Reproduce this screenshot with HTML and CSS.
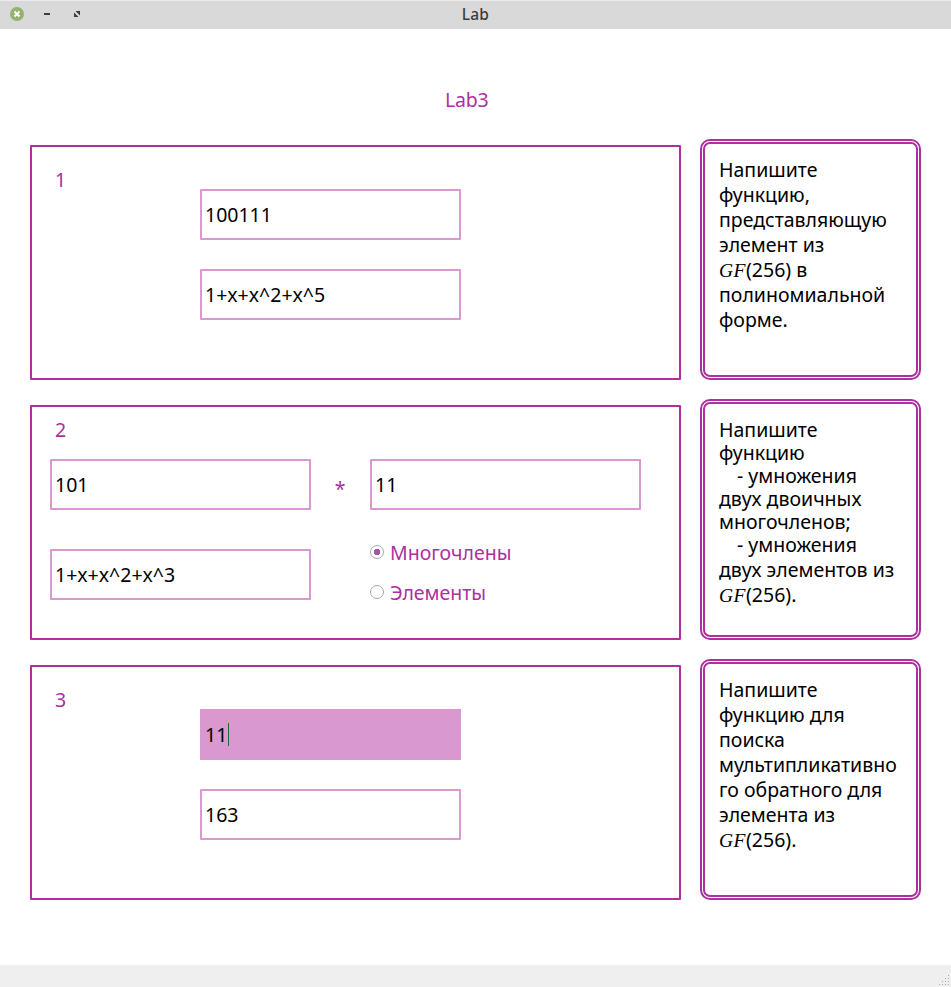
FILE: index.html
```html
<!DOCTYPE html>
<html lang="ru">
<head>
<meta charset="utf-8">
<title>Lab</title>
<link rel="stylesheet" href="styles.css">
</head>
<body>
<header class="titlebar">
  <svg class="controls" width="90" height="28" viewBox="0 0 90 28">
    <circle cx="17" cy="13" r="7" fill="#92b372"/>
    <path d="M14.5 10.5l5 5M19.5 10.5l-5 5" stroke="#fff" stroke-width="1.9"/>
    <path d="M44 13h6" stroke="#3c3c3c" stroke-width="2"/>
    <path d="M75.5 10h4.5v4.500zM74 11.500v4.500h4.500z" fill="#3c3c3c"/>
  </svg>
  <span class="window-title">Lab</span>
</header>
<main class="content">
  <h1 class="heading">Lab3</h1>
  <div class="tasks">
    <section class="card">
      <div class="side-number">1</div>
      <div class="fields">
        <div class="field">100111</div>
        <div class="field">1+x+x^2+x^5</div>
      </div>
    </section>
    <aside class="note">
      <p>Напишите<br>функцию,<br>представляющую<br>элемент из<br><i>GF</i>(256) в<br>полиномиальной<br>форме.</p>
    </aside>

    <section class="card stacked">
      <div class="top-number">2</div>
      <div class="operands">
        <div class="field">101</div>
        <div class="operator">*</div>
        <div class="field wide">11</div>
      </div>
      <div class="result-row">
        <div class="field">1+x+x^2+x^3</div>
        <div class="options">
          <div class="option"><span class="radio checked"></span>Многочлены</div>
          <div class="option"><span class="radio"></span>Элементы</div>
        </div>
      </div>
    </section>
    <aside class="note">
      <p class="tight">Напишите<br>функцию<br><span class="indent">- умножения</span><br>двух двоичных<br>многочленов;<br><span class="indent">- умножения</span></p>
      <p>двух элементов из<br><i>GF</i>(256).</p>
    </aside>

    <section class="card">
      <div class="side-number">3</div>
      <div class="fields">
        <div class="field focused">11<span class="caret"></span></div>
        <div class="field">163</div>
      </div>
    </section>
    <aside class="note">
      <p>Напишите<br>функцию для<br>поиска<br>мультипликативно<br>го обратного для<br>элемента из<br><i>GF</i>(256).</p>
    </aside>
  </div>
</main>
<footer class="statusbar">
  <svg width="12" height="12" viewBox="0 0 12 12" fill="#a8a8a8">
    <path d="M9 0h1v1h-1zM6 3h1v1h-1zM9 3h1v1h-1zM3 6h1v1h-1zM6 6h1v1h-1zM9 6h1v1h-1zM0 9h1v1h-1zM3 9h1v1h-1zM6 9h1v1h-1zM9 9h1v1h-1z"/>
  </svg>
</footer>
</body>
</html>
```
FILE: styles.css
```css
* { box-sizing: border-box; }
body {
  margin: 0;
  height: 987px;
  display: flex;
  flex-direction: column;
  background: #fff;
  color: #000;
  font: 19.5px/25px "Noto Sans", sans-serif;
}
.titlebar {
  height: 29px;
  display: grid;
  grid-template-columns: 90px 1fr 90px;
  background: #d9d9d9;
  border-top: 1px solid #ececec;
}
.controls { display: block; }
.window-title {
  text-align: center;
  font-size: 15.5px;
  font-weight: 500;
  line-height: 27px;
  letter-spacing: 0.2px;
  color: #3c3c3c;
}
.content { flex: 1; padding: 58px 0 0 30px; }
.heading {
  margin: 0 0 27px;
  padding-left: 415px;
  font-size: 19.5px;
  font-weight: 400;
  line-height: 25px;
  letter-spacing: -0.2px;
  color: #ad2fa0;
}
.tasks {
  display: grid;
  grid-template-columns: 651px 221px;
  grid-auto-rows: 241px;
  gap: 19px;
}
.card {
  margin-top: 6px;
  border: 2px solid #ad2fa0;
  border-radius: 1px;
  display: flex;
}
.card.stacked { display: block; padding: 10px 0 0 18px; }
.side-number { width: 168px; padding: 20px 0 0 23px; color: #ad2fa0; }
.top-number { height: 24px; padding-left: 5px; color: #ad2fa0; }
.fields { padding-top: 42px; display: flex; flex-direction: column; gap: 29px; }
.field {
  width: 261px;
  height: 51px;
  padding-left: 3px;
  border: 2px solid #d998cf;
  border-radius: 1px;
  display: flex;
  align-items: center;
}
.field.wide { width: 271px; }
.field.focused { background: #d998cf; border-radius: 0; }
.caret { width: 1px; height: 23px; margin-left: 1px; background: #1b6b34; }
.operands { display: flex; margin-top: 18px; }
.operator { width: 58px; margin-right: 1px; padding-top: 17px; text-align: center; color: #ad2fa0; }
.result-row { display: flex; gap: 59px; margin-top: 30px; }
.result-row .field { margin-top: 9px; }
.options { display: flex; flex-direction: column; gap: 15px; color: #ad2fa0; }
.option { display: flex; }
.radio {
  width: 14px;
  height: 14px;
  margin: 5px 6px 0 0;
  border: 1px solid #a9a9a9;
  border-radius: 50%;
  background: #fff;
}
.radio.checked { background: radial-gradient(circle, #a8539f 2.9px, #fff 3.5px); }
.note {
  padding: 13px 0 0 14px;
  border: 5px double #ad2fa0;
  border-radius: 10px;
  white-space: nowrap;
}
.note p { margin: 0; }
.note .tight { line-height: 23px; padding: 1px 0; }
.note i {
  font-family: "Liberation Serif", serif;
  line-height: 1;
  letter-spacing: 0.5px;
}
.indent { padding-left: 18px; }
.statusbar {
  height: 22px;
  padding: 10px 0 0 939px;
  background: #efefef;
}
.statusbar svg { display: block; }
```
